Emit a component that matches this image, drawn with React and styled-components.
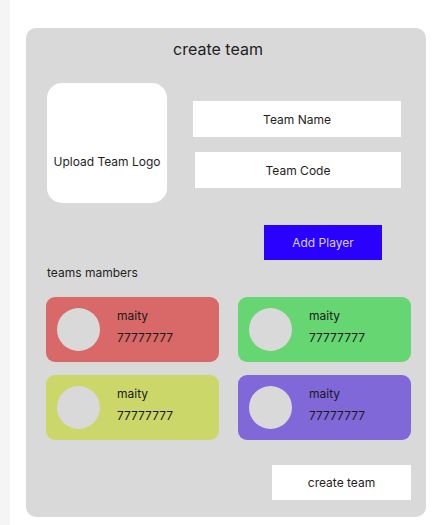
import React from "react";
import styled, { createGlobalStyle } from "styled-components";

const Global = createGlobalStyle`
  html, body { margin: 0; padding: 0; background: #ffffff; }
  body { font-family: Inter, "Noto Sans", "Liberation Sans", sans-serif; color: #1e1e1e; }
  * { box-sizing: border-box; }
`;

const Page = styled.div`
  display: flex;
  min-height: 525px;
`;

const SideStrip = styled.div`
  width: 10px;
  flex: 0 0 10px;
  background: #f5f5f5;
`;

const Panel = styled.div`
  margin: 28px 0 0 16px;
  width: 400px;
  height: 489px;
  background: #d9d9d9;
  border-radius: 10px;
  padding: 11px 0 0 20px;
  display: flex;
  flex-direction: column;
`;

const Title = styled.h1`
  margin: 0 0 0 -20px;
  padding-right: 16px;
  font-size: 16px;
  line-height: 20px;
  font-weight: 400;
  text-align: center;
  color: #1e1e1e;
`;

const TopRow = styled.div`
  display: flex;
  margin-top: 24px;
`;

const LogoBox = styled.div`
  width: 120px;
  height: 120px;
  margin-left: 1px;
  background: #ffffff;
  border-radius: 15px;
  display: flex;
  flex-direction: column;
  justify-content: flex-end;
  align-items: center;
  padding-bottom: 33px;
  font-size: 12px;
  line-height: 16px;
  color: #1e1e1e;
`;

const Fields = styled.div`
  display: flex;
  flex-direction: column;
  gap: 15px;
  margin-left: 26px;
  padding-top: 18px;
`;

const Field = styled.div`
  height: 36px;
  background: #ffffff;
  display: flex;
  align-items: center;
  justify-content: center;
  font-size: 12px;
  color: #1e1e1e;
  margin-left: ${(p) => (p.$shift ? "2px" : "0")};
  width: ${(p) => (p.$shift ? "206px" : "208px")};
`;

const ActionRow = styled.div`
  display: flex;
  margin-top: 22px;
  padding-left: 218px;
`;

const Button = styled.div`
  width: ${(p) => p.$w}px;
  height: 35px;
  display: flex;
  align-items: center;
  justify-content: center;
  font-size: 12px;
  background: ${(p) => (p.$primary ? "#2a00ff" : "#ffffff")};
  color: ${(p) => (p.$primary ? "#d6d2ff" : "#1e1e1e")};
`;

const SectionLabel = styled.div`
  margin-top: 5px;
  margin-left: 1px;
  font-size: 12px;
  line-height: 16px;
  color: #1e1e1e;
`;

const Grid = styled.div`
  display: grid;
  grid-template-columns: 173px 173px;
  column-gap: 19px;
  row-gap: 13px;
  margin-top: 16px;
`;

const Card = styled.div`
  height: 65px;
  border-radius: 9px;
  background: ${(p) => p.$bg};
  display: flex;
  padding-left: 11px;
  align-items: center;
`;

const Avatar = styled.div`
  width: 43px;
  height: 43px;
  border-radius: 50%;
  background: #d9d9d9;
  flex: 0 0 43px;
`;

const Info = styled.div`
  align-self: flex-start;
  margin-left: 17px;
  padding-top: 11px;
  display: flex;
  flex-direction: column;
  gap: 6px;
  font-size: 12px;
  line-height: 16px;
  color: #1a1a1a;
`;

const BottomRow = styled.div`
  display: flex;
  justify-content: flex-end;
  margin-top: 25px;
  padding-right: 15px;
`;

const members = [
  { bg: "#d96868" },
  { bg: "#66d672" },
  { bg: "#ccd76a" },
  { bg: "#8068d9" },
];

export default function App() {
  return (
    <>
      <Global />
      <Page>
        <SideStrip />
        <Panel>
          <Title>create team</Title>
          <TopRow>
            <LogoBox>Upload Team Logo</LogoBox>
            <Fields>
              <Field>Team Name</Field>
              <Field $shift>Team Code</Field>
            </Fields>
          </TopRow>
          <ActionRow>
            <Button $primary $w={118}>Add Player</Button>
          </ActionRow>
          <SectionLabel>teams mambers</SectionLabel>
          <Grid>
            {members.map((m, i) => (
              <Card key={i} $bg={m.bg}>
                <Avatar />
                <Info>
                  <span>maity</span>
                  <span>77777777</span>
                </Info>
              </Card>
            ))}
          </Grid>
          <BottomRow>
            <Button $w={139}>create team</Button>
          </BottomRow>
        </Panel>
      </Page>
    </>
  );
}
